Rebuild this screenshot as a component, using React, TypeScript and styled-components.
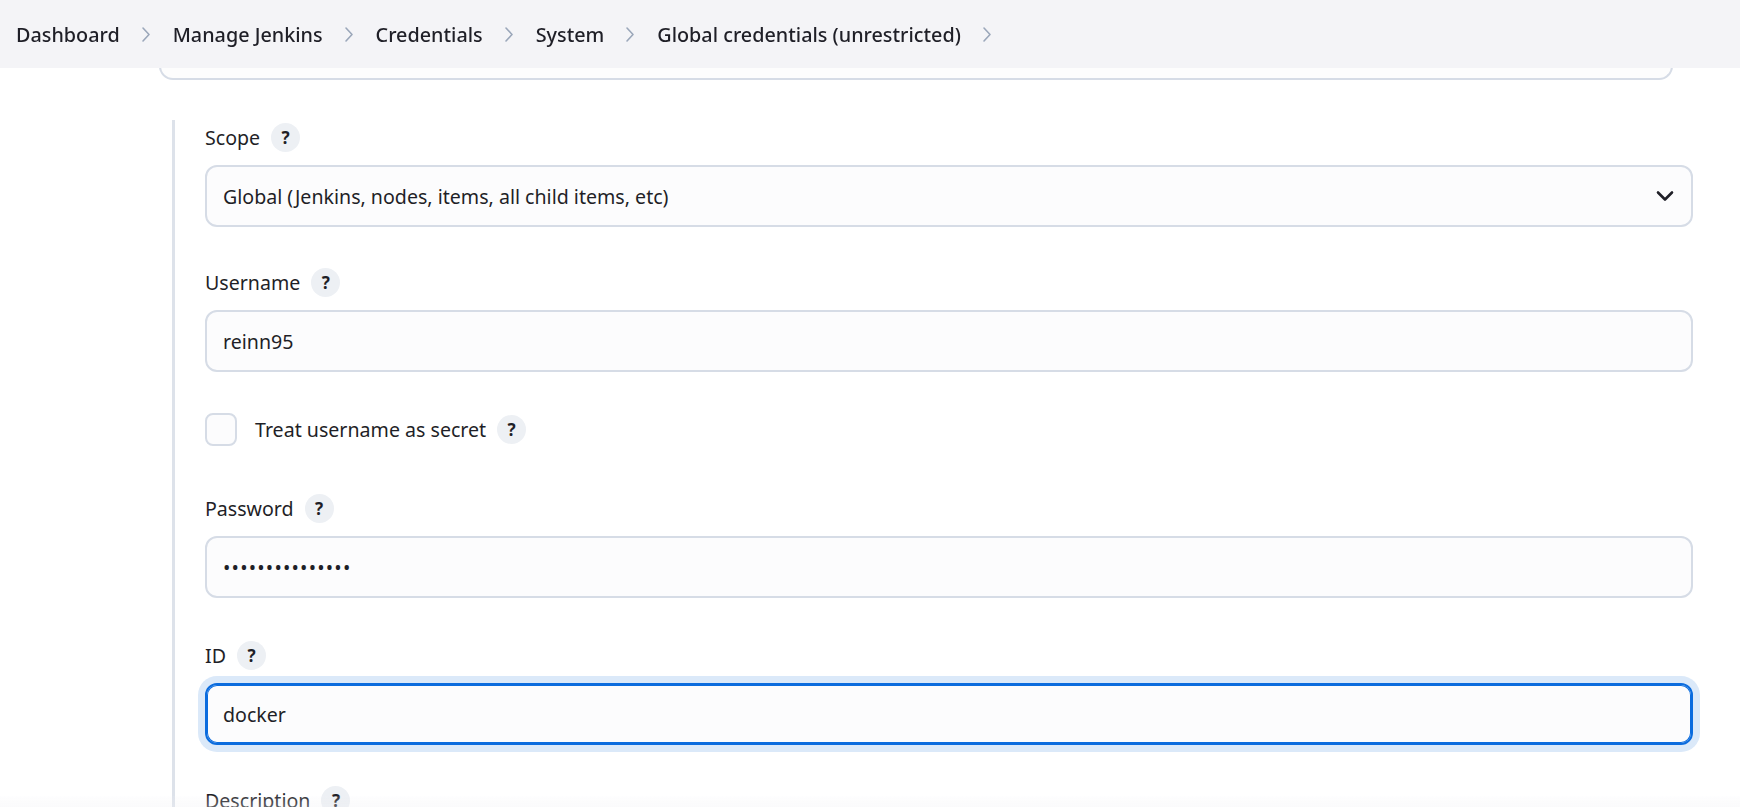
import styled, { createGlobalStyle } from 'styled-components';

const GlobalStyle = createGlobalStyle`
  html, body {
    margin: 0;
    background: #ffffff;
  }
  body {
    font-family: 'Noto Sans', 'Open Sans', sans-serif;
    color: #1f1f27;
    overflow: hidden;
  }
  * {
    box-sizing: border-box;
  }
`;

const Header = styled.header`
  position: fixed;
  top: 0;
  left: 0;
  right: 0;
  height: 68px;
  background: rgba(244, 244, 247, 0.98);
  display: flex;
  align-items: center;
  padding-left: 16px;
  z-index: 10;
`;

const Crumbs = styled.ol`
  list-style: none;
  display: flex;
  align-items: center;
  margin: 0;
  padding: 0;
`;

const Crumb = styled.li`
  display: flex;
  align-items: center;
  font-size: 19.8px;
  font-weight: 500;
  color: #1f1f27;
  white-space: nowrap;
`;

const Separator = styled.span`
  display: inline-flex;
  margin: 0 22px 0 21px;
  color: #9ba7ba;
`;

const Main = styled.main`
  padding: 0 47px 0 159px;
`;

const TopCard = styled.div`
  height: 80px;
  margin-right: 20px;
  background: #fdfdfd;
  border: 2px solid #d6dce6;
  border-top: none;
  border-radius: 0 0 14px 14px;
`;

const Section = styled.section`
  margin: 40px 0 0 13px;
  padding: 2px 0 40px 30px;
  border-left: 3px solid #dde2ea;
  display: flex;
  flex-direction: column;
`;

const Field = styled.div<{ $after?: number }>`
  margin-bottom: ${p => p.$after ?? 40}px;
`;

const LabelRow = styled.div`
  display: flex;
  align-items: center;
  gap: 11px;
  height: 30px;
  margin-bottom: 13px;
  font-size: 19.6px;
`;

const Help = styled.button`
  width: 29px;
  height: 29px;
  flex: none;
  border-radius: 50%;
  border: none;
  padding: 0;
  background: #edf0f4;
  color: #1f1f27;
  font-family: 'Noto Sans', sans-serif;
  font-size: 17px;
  font-weight: 700;
  line-height: 1;
  display: inline-flex;
  align-items: center;
  justify-content: center;
`;

const TextInput = styled.input<{ $focused?: boolean; $secret?: boolean }>`
  display: block;
  width: 100%;
  height: 62px;
  padding: 0 16px;
  border: 2px solid ${p => (p.$focused ? '#0b6cde' : '#d6dce6')};
  border-radius: 12px;
  background: #fcfcfd;
  color: #1f1f27;
  font-family: 'Noto Sans', sans-serif;
  font-size: 19.6px;
  letter-spacing: ${p => (p.$secret ? '1.2px' : 'normal')};
  outline: none;
  box-shadow: ${p =>
    p.$focused ? 'inset 0 0 0 1px #0b6cde, 0 0 0 7px #dbe9f9' : 'none'};
`;

const SelectWrap = styled.div`
  position: relative;
`;

const Select = styled.select`
  display: block;
  width: 100%;
  height: 62px;
  padding: 0 50px 0 16px;
  border: 2px solid #d6dce6;
  border-radius: 12px;
  background: #fcfcfd;
  color: #1f1f27;
  font-family: 'Noto Sans', sans-serif;
  font-size: 19.6px;
  appearance: none;
  outline: none;
`;

const Chevron = styled.svg`
  position: absolute;
  right: 19px;
  top: 50%;
  transform: translateY(-50%);
  pointer-events: none;
`;

const CheckRow = styled.label`
  display: flex;
  align-items: center;
  height: 33px;
  font-size: 19.6px;
`;

const Box = styled.span`
  width: 32px;
  height: 33px;
  border: 2px solid #d6dce6;
  border-radius: 8px;
  background: #fcfcfd;
  margin-right: 18px;
`;

const CheckText = styled.span`
  margin-right: 11px;
`;

const BottomBar = styled.div`
  position: fixed;
  left: 0;
  right: 0;
  bottom: 0;
  height: 11px;
  background: linear-gradient(to bottom, rgba(243, 243, 246, 0.1), rgba(240, 240, 244, 0.3));
  z-index: 10;
`;

const crumbs = ['Dashboard', 'Manage Jenkins', 'Credentials', 'System', 'Global credentials (unrestricted)'];

function CrumbChevron() {
  return (
    <svg width="10" height="17" viewBox="0 0 10 17" fill="none">
      <path d="M2 2l6 6.5L2 15" stroke="currentColor" strokeWidth="1.6" strokeLinecap="round" strokeLinejoin="round" />
    </svg>
  );
}

function Label({ text }: { text: string }) {
  return (
    <LabelRow>
      <span>{text}</span>
      <Help type="button">?</Help>
    </LabelRow>
  );
}

export default function App() {
  return (
    <>
      <GlobalStyle />
      <Header>
        <Crumbs>
          {crumbs.map(c => (
            <Crumb key={c}>
              {c}
              <Separator>
                <CrumbChevron />
              </Separator>
            </Crumb>
          ))}
        </Crumbs>
      </Header>
      <Main>
        <TopCard />
        <Section>
          <Field>
            <Label text="Scope" />
            <SelectWrap>
              <Select defaultValue="GLOBAL">
                <option value="GLOBAL">Global (Jenkins, nodes, items, all child items, etc)</option>
                <option value="SYSTEM">System (Jenkins and nodes only)</option>
              </Select>
              <Chevron width="18" height="11" viewBox="0 0 18 11" fill="none">
                <path d="M2 2l7 7 7-7" stroke="#1f1f27" strokeWidth="2.6" strokeLinecap="round" strokeLinejoin="round" />
              </Chevron>
            </SelectWrap>
          </Field>
          <Field $after={41}>
            <Label text="Username" />
            <TextInput type="text" defaultValue="reinn95" />
          </Field>
          <Field $after={47}>
            <CheckRow>
              <Box />
              <CheckText>Treat username as secret</CheckText>
              <Help type="button">?</Help>
            </CheckRow>
          </Field>
          <Field $after={42}>
            <Label text="Password" />
            <TextInput type="password" defaultValue="dockerhubpass12" $secret />
          </Field>
          <Field>
            <Label text="ID" />
            <TextInput type="text" defaultValue="docker" $focused />
          </Field>
          <Field>
            <Label text="Description" />
            <TextInput type="text" defaultValue="" />
          </Field>
        </Section>
      </Main>
      <BottomBar />
    </>
  );
}
